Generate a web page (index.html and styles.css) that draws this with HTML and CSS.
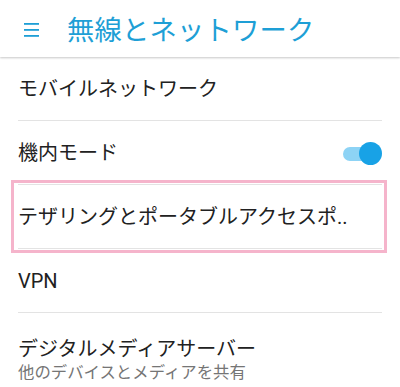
FILE: index.html
```html
<!DOCTYPE html>
<html lang="ja">
<head>
<meta charset="utf-8">
<link rel="stylesheet" href="styles.css">
</head>
<body>
<div class="screen">
  <header class="appbar">
    <svg class="menu" width="16" height="16" viewBox="0 0 16 16">
      <rect x="0" y="1" width="15" height="1.8" fill="#1e9fd6"/>
      <rect x="0" y="7" width="15" height="1.8" fill="#1e9fd6"/>
      <rect x="0" y="13" width="15" height="1.8" fill="#1e9fd6"/>
    </svg>
    <h1 class="title">無線とネットワーク</h1>
  </header>
  <ul class="list">
    <li class="item"><span class="label">モバイルネットワーク</span></li>
    <li class="item"><span class="label">機内モード</span><span class="switch"><span class="track"></span><span class="thumb"></span></span></li>
    <li class="item"><span class="label">テザリングとポータブルアクセスポ..</span></li>
    <li class="item"><span class="label">VPN</span></li>
    <li class="item two"><span class="label">デジタルメディアサーバー</span><span class="sub">他のデバイスとメディアを共有</span></li>
  </ul>
  <div class="highlight"></div>
</div>
</body>
</html>
```
FILE: styles.css
```css
html, body {
  margin: 0;
  padding: 0;
  background: #ffffff;
}
.screen {
  position: relative;
  width: 400px;
  height: 387px;
  overflow: hidden;
  font-family: Roboto, "Noto Sans CJK JP", sans-serif;
  color: #212121;
}
.appbar {
  height: 57px;
  display: flex;
  align-items: center;
  padding-left: 24px;
  box-sizing: border-box;
  background: #fff;
  box-shadow: 0 1px 2px rgba(0,0,0,0.22);
  position: relative;
  z-index: 1;
}
.menu {
  display: block;
  margin-top: 2px;
}
.title {
  margin: 0 0 0 27px;
  font-size: 27.3px;
  font-weight: 400;
  color: #1e9fd6;
  font-family: "Noto Sans CJK JP", sans-serif;
  line-height: 1;
  letter-spacing: 0.2px;
}
.list {
  list-style: none;
  margin: 0 18px;
  padding: 0;
}
.item {
  height: 63px;
  border-bottom: 1px solid #e3e3e3;
  display: flex;
  align-items: center;
  justify-content: space-between;
}
.label {
  font-size: 20px;
  line-height: 1;
  white-space: nowrap;
}
.item.two {
  flex-direction: column;
  align-items: flex-start;
  justify-content: flex-start;
  padding-top: 26px;
  box-sizing: border-box;
  border-bottom: none;
}
.sub {
  font-size: 16.4px;
  color: #757575;
  margin-top: 6px;
  line-height: 1;
  white-space: nowrap;
}
.switch {
  position: relative;
  width: 39px;
  height: 24px;
  margin-top: 2px;
}
.track {
  position: absolute;
  left: 0;
  top: 5px;
  width: 34px;
  height: 14px;
  border-radius: 7px;
  background: #8dd3f5;
}
.thumb {
  position: absolute;
  right: 0;
  top: 0;
  width: 23px;
  height: 23px;
  border-radius: 50%;
  background: #18a2e6;
}
.highlight {
  position: absolute;
  left: 11px;
  top: 180px;
  width: 376px;
  height: 73px;
  box-sizing: border-box;
  border: 3px solid #f5b4cb;
  pointer-events: none;
}
```
